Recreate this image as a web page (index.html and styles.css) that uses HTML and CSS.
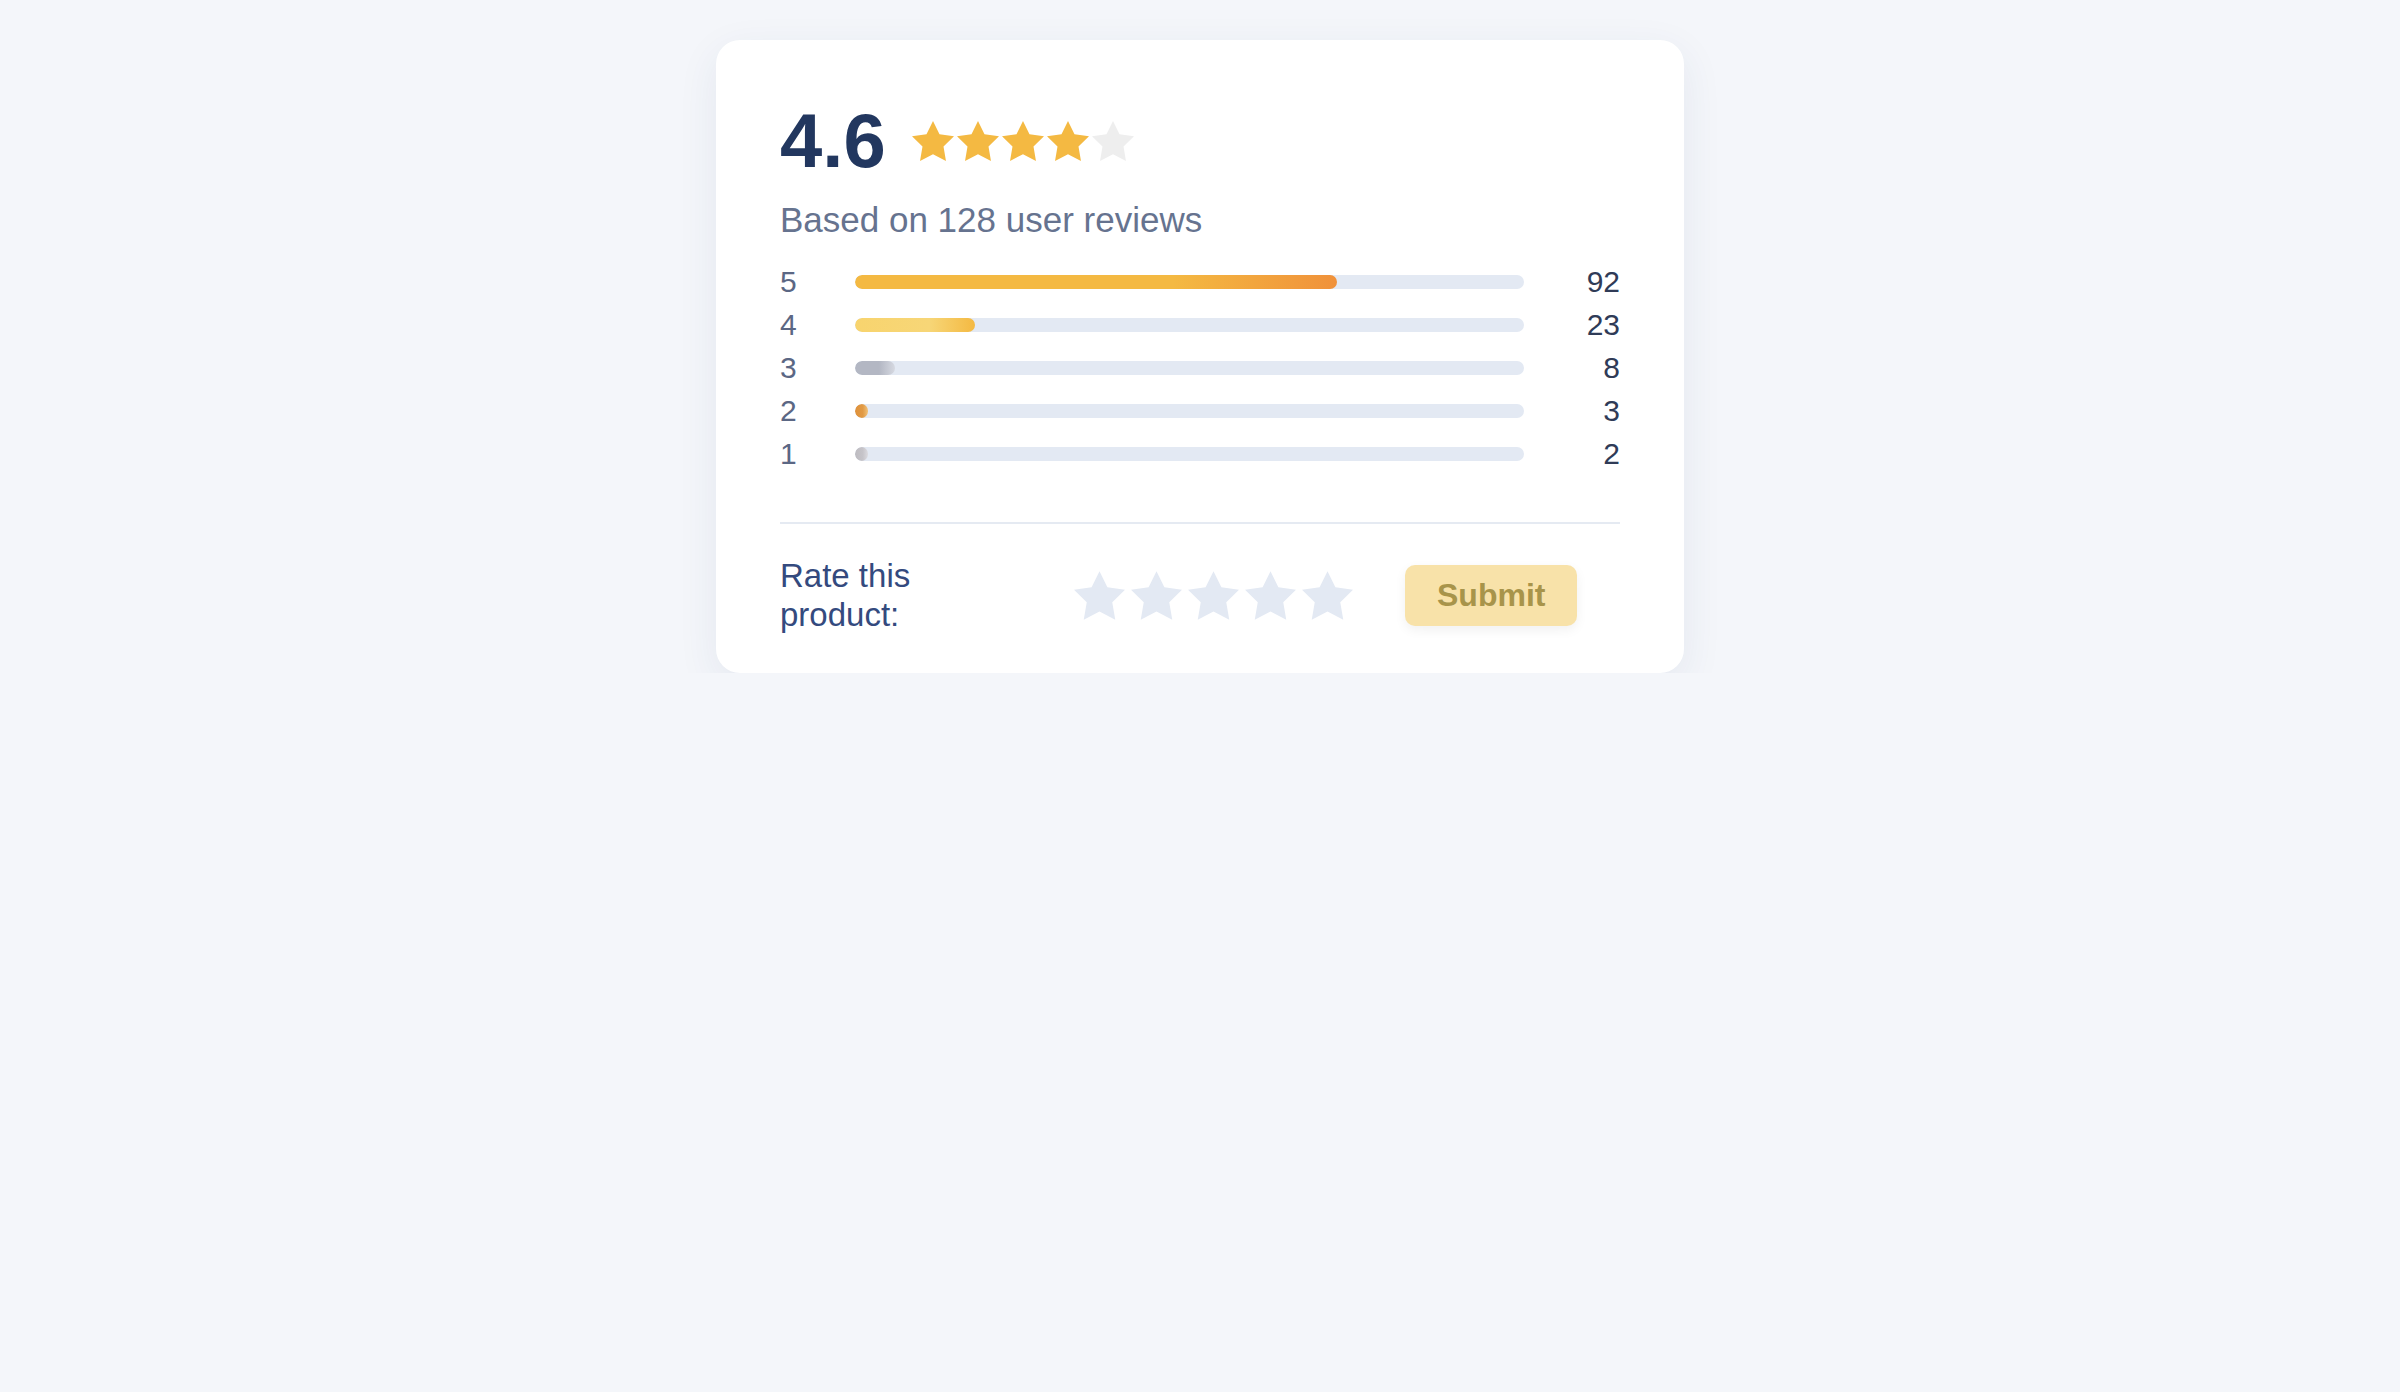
FILE: index.html
```html
<!DOCTYPE html>
<html>
<head>
    <meta charset="utf-8">
    <title>Product rating</title>
    <link rel="stylesheet" href="styles.css">
</head>
<body>
<div class="card">
    <div class="score-row">
        <div class="score">4.6</div>
        <div class="score-stars">
            <svg class="star-sm on" viewBox="2 2 20 19.02"><polygon points="12,2 15.09,8.26 22,9.27 17,14.14 18.18,21.02 12,17.77 5.82,21.02 7,14.14 2,9.27 8.91,8.26"/></svg>
            <svg class="star-sm on" viewBox="2 2 20 19.02"><polygon points="12,2 15.09,8.26 22,9.27 17,14.14 18.18,21.02 12,17.77 5.82,21.02 7,14.14 2,9.27 8.91,8.26"/></svg>
            <svg class="star-sm on" viewBox="2 2 20 19.02"><polygon points="12,2 15.09,8.26 22,9.27 17,14.14 18.18,21.02 12,17.77 5.82,21.02 7,14.14 2,9.27 8.91,8.26"/></svg>
            <svg class="star-sm on" viewBox="2 2 20 19.02"><polygon points="12,2 15.09,8.26 22,9.27 17,14.14 18.18,21.02 12,17.77 5.82,21.02 7,14.14 2,9.27 8.91,8.26"/></svg>
            <svg class="star-sm off" viewBox="2 2 20 19.02"><polygon points="12,2 15.09,8.26 22,9.27 17,14.14 18.18,21.02 12,17.77 5.82,21.02 7,14.14 2,9.27 8.91,8.26"/></svg>
        </div>
    </div>
    <div class="based">Based on 128 user reviews</div>

    <div class="bars">
        <div class="bar-row">
            <span class="bar-label">5</span>
            <div class="track"><div class="fill fill-5" style="width: 72%;"></div></div>
            <span class="bar-count">92</span>
        </div>
        <div class="bar-row">
            <span class="bar-label">4</span>
            <div class="track"><div class="fill fill-4" style="width: 18%;"></div></div>
            <span class="bar-count">23</span>
        </div>
        <div class="bar-row">
            <span class="bar-label">3</span>
            <div class="track"><div class="fill fill-3" style="width: 6%;"></div></div>
            <span class="bar-count">8</span>
        </div>
        <div class="bar-row">
            <span class="bar-label">2</span>
            <div class="track"><div class="fill fill-2" style="width: 2%;"></div></div>
            <span class="bar-count">3</span>
        </div>
        <div class="bar-row">
            <span class="bar-label">1</span>
            <div class="track"><div class="fill fill-1" style="width: 2%;"></div></div>
            <span class="bar-count">2</span>
        </div>
    </div>

    <div class="divider"></div>

    <div class="rate-row">
        <div class="rate-label">Rate this product:</div>
        <div class="rate-stars">
            <svg class="star-lg" viewBox="2 2 20 19.02"><polygon points="12,2 15.09,8.26 22,9.27 17,14.14 18.18,21.02 12,17.77 5.82,21.02 7,14.14 2,9.27 8.91,8.26"/></svg>
            <svg class="star-lg" viewBox="2 2 20 19.02"><polygon points="12,2 15.09,8.26 22,9.27 17,14.14 18.18,21.02 12,17.77 5.82,21.02 7,14.14 2,9.27 8.91,8.26"/></svg>
            <svg class="star-lg" viewBox="2 2 20 19.02"><polygon points="12,2 15.09,8.26 22,9.27 17,14.14 18.18,21.02 12,17.77 5.82,21.02 7,14.14 2,9.27 8.91,8.26"/></svg>
            <svg class="star-lg" viewBox="2 2 20 19.02"><polygon points="12,2 15.09,8.26 22,9.27 17,14.14 18.18,21.02 12,17.77 5.82,21.02 7,14.14 2,9.27 8.91,8.26"/></svg>
            <svg class="star-lg" viewBox="2 2 20 19.02"><polygon points="12,2 15.09,8.26 22,9.27 17,14.14 18.18,21.02 12,17.77 5.82,21.02 7,14.14 2,9.27 8.91,8.26"/></svg>
        </div>
        <button class="submit">Submit</button>
    </div>
</div>
</body>
</html>
```

FILE: styles.css
```css
body {
    margin: 0;
    background-color: #f4f6fa;
    font-family: "Liberation Sans", Arial, sans-serif;
}

.card {
    box-sizing: border-box;
    width: 968px;
    margin: 40px auto 0;
    padding: 63px 64px 39px;
    background-color: #ffffff;
    border-radius: 24px;
    box-shadow: 0 12px 40px rgba(40, 60, 110, 0.08);
}

.score-row {
    display: flex;
    align-items: center;
    gap: 26px;
}

.score {
    font-size: 76px;
    line-height: 76px;
    font-weight: bold;
    color: #22375f;
}

.score-stars {
    display: flex;
    gap: 3px;
}

.star-sm {
    width: 42px;
    height: 40px;
}

.star-sm.on { fill: #f4b942; }
.star-sm.off { fill: #eeeeee; }

.based {
    margin-top: 20px;
    font-size: 35px;
    line-height: 42px;
    color: #66738f;
}

.bars {
    display: flex;
    flex-direction: column;
    gap: 7px;
    margin-top: 23px;
}

.bar-row {
    display: grid;
    grid-template-columns: 51px 1fr 72px;
    column-gap: 24px;
    align-items: center;
    font-size: 30px;
    line-height: 36px;
}

.bar-label { color: #5b6784; }

.bar-count {
    text-align: right;
    color: #2f3b57;
}

.track {
    height: 14px;
    border-radius: 7px;
    background-color: #e3e9f3;
    overflow: hidden;
}

.fill {
    height: 100%;
    border-radius: 7px;
}

.fill-5 { background: linear-gradient(90deg, #f4b942 0%, #f4b942 66%, #f0913a 100%); }
.fill-4 { background: linear-gradient(90deg, #f8d46e 0%, #f7d677 62%, #f4b942 100%); }
.fill-3 { background: linear-gradient(90deg, #b3b7c3 0%, #b3b7c3 60%, #d6d9e1 100%); }
.fill-2 { background: linear-gradient(90deg, #df913a 0%, #e19a45 60%, #f1c27a 100%); }
.fill-1 { background: linear-gradient(90deg, #bdbbc0 0%, #c6c4c9 60%, #dcdbe0 100%); }

.divider {
    height: 2px;
    margin: 50px 0 32px;
    background-color: #e5eaf2;
}

.rate-row {
    display: flex;
    align-items: center;
}

.rate-label {
    width: 246px;
    margin-right: 48px;
    font-size: 33px;
    line-height: 39px;
    color: #344a7e;
}

.rate-stars {
    display: flex;
    gap: 6px;
    margin-right: 52px;
}

.star-lg {
    width: 51px;
    height: 49px;
    fill: #e3e9f3;
}

.submit {
    border: none;
    border-radius: 10px;
    padding: 12px 32px;
    font-family: "Liberation Sans", Arial, sans-serif;
    font-size: 32px;
    line-height: 37px;
    font-weight: bold;
    color: #a8944a;
    background-color: #f8e2a9;
    box-shadow: 0 4px 12px rgba(0, 0, 0, 0.06);
    cursor: pointer;
}
```
